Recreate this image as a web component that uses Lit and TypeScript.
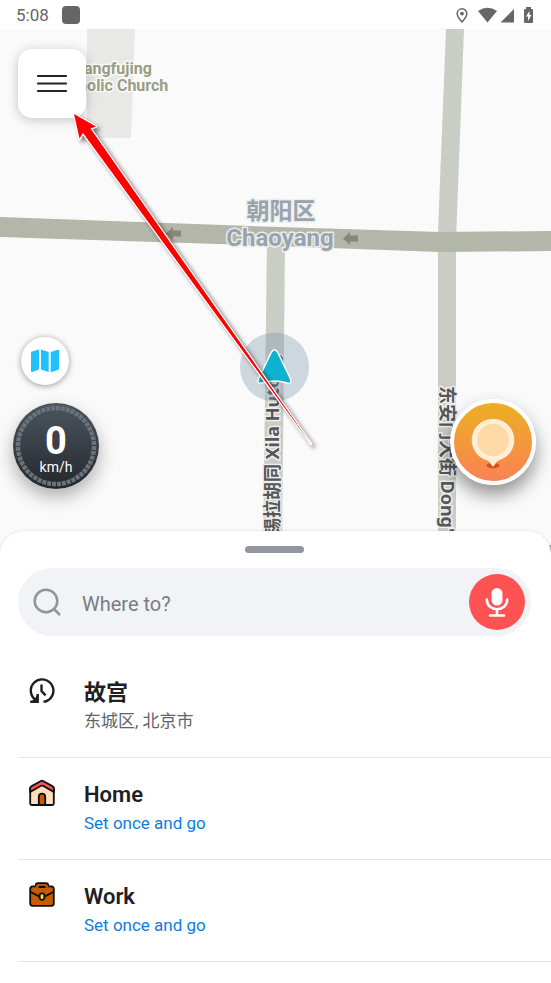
import { LitElement, html, svg, css, type TemplateResult } from "lit";
import { customElement, property } from "lit/decorators.js";

const historyIcon = html`<svg viewBox="0 0 28 28" width="28" height="28" fill="none" stroke="#1d1e22" stroke-width="2.4" aria-hidden="true">
  <path d="M8.500 23.500A11.300 11.300 0 1 1 15.500 24.900" />
  <path d="M9.700 17V24.700H2.300" />
  <path d="M9.600 17V25H2.600L6.600 22Z" fill="#1d1e22" stroke="none" />
  <path d="M13.500 7.500V14L17.600 18.400" />
</svg>`;

const homeIcon = html`<svg viewBox="0 0 28 28" width="28" height="28" stroke="#0e0e0e" stroke-width="1.800" stroke-linejoin="round" aria-hidden="true">
  <path d="M2.200 9V24.500Q2.200 26 3.700 26H24.300Q25.800 26 25.800 24.500V9L14 3Z" fill="#ffdfbd" />
  <path d="M2.200 9.200Q2.200 8 3.200 7.400L13 2Q14 1.500 15 2L24.800 7.400Q25.800 8 25.800 9.200V13L15 6.800Q14 6.300 13 6.800L2.200 13Z" fill="#ff5252" />
  <path d="M10.800 26V17.800A3.200 3.200 0 0 1 17.200 17.800V26Z" fill="#c75b00" />
</svg>`;

const workIcon = html`<svg viewBox="0 0 28 28" width="28" height="28" stroke="#0e0e0e" stroke-width="1.800" stroke-linejoin="round" stroke-linecap="round" aria-hidden="true">
  <path d="M7.800 7V4.500Q7.800 2.200 10 2.200H18Q20.200 2.200 20.200 4.500V7Z" fill="#c75b00" />
  <rect x="2.200" y="5.300" width="23.600" height="19.500" rx="2.600" fill="#c75b00" />
  <path d="M8.700 5.300H19.300" stroke="#c75b00" stroke-width="2.200" />
  <path d="M11.300 6H16.700" />
  <path d="M2.800 11L11.500 15.600M25.200 11L16.500 15.600" fill="none" />
  <path d="M11.700 14.200Q11.700 12.400 14 12.400T16.300 14.200V17Q15.800 19 14 19.200Q12.200 19 11.700 17Z" fill="#ffdb3a" />
</svg>`;

@customElement("place-row")
class PlaceRow extends LitElement {
  @property() name = "";
  @property() detail = "";
  @property({ attribute: false }) icon: TemplateResult = historyIcon;
  @property({ type: Boolean }) unset = false;

  static styles = css`
    :host {
      display: block;
      border-bottom: 1px solid #e4e5e7;
    }
    .row {
      box-sizing: border-box;
      display: flex;
      align-items: flex-start;
      gap: 28px;
      width: 100%;
      height: 101px;
      padding: 21px 16px 0 10px;
      border: 0;
      background: none;
      text-align: left;
      font-family: Roboto, "Noto Sans CJK SC", sans-serif;
      cursor: pointer;
    }
    .row svg {
      flex: none;
    }
    .text {
      display: flex;
      flex-direction: column;
    }
    .name {
      font-size: 22px;
      line-height: 32px;
      font-weight: 600;
      color: #1f2024;
    }
    .detail {
      font-size: 17px;
      line-height: 24px;
      color: #606369;
    }
    .unset {
      color: #0f7be0;
    }
  `;

  render() {
    return html`<button class="row">
      ${this.icon}
      <span class="text">
        <span class="name">${this.name}</span>
        <span class="detail ${this.unset ? "unset" : ""}">${this.detail}</span>
      </span>
    </button>`;
  }
}

@customElement("app-root")
class AppRoot extends LitElement {
  static styles = css`
    :host {
      display: flex;
      flex-direction: column;
      min-height: 100vh;
      background: #fff;
      overflow: hidden;
      font-family: Roboto, "Noto Sans CJK SC", sans-serif;
    }
    button {
      padding: 0;
      border: 0;
      cursor: pointer;
    }
    .status {
      display: flex;
      align-items: center;
      height: 29px;
      padding: 0 16px;
      color: #666;
    }
    .time {
      font-size: 17px;
      line-height: 20px;
    }
    .app {
      width: 18px;
      height: 18px;
      margin-left: 13px;
      border-radius: 4px;
      background: #666;
    }
    .signals {
      margin-left: auto;
    }
    .map {
      position: relative;
      flex: 1 0 480px;
      margin-bottom: -24px;
      background: #fafafa;
      overflow: hidden;
    }
    .canvas {
      position: absolute;
      inset: 0;
      width: 100%;
      height: 100%;
    }
    .arrow {
      pointer-events: none;
      filter: drop-shadow(3px 3px 2px rgba(0, 0, 0, 0.5));
    }
    .shaft {
      fill: #f00;
      stroke: #fff;
      stroke-width: 2.5;
      stroke-linejoin: round;
      paint-order: stroke;
    }
    .label {
      font-weight: 700;
      paint-order: stroke;
      stroke: #fafafa;
      stroke-width: 3px;
      stroke-linejoin: round;
    }
    .district {
      font-size: 24px;
      fill: #98a3ae;
      stroke: #eceeec;
    }
    .district-cjk {
      font-size: 23px;
    }
    .church {
      font-size: 16px;
      fill: #9a9e84;
    }
    .street {
      font-size: 18px;
      fill: #55575a;
      stroke: #eff0ee;
    }
    .latin {
      font-family: "Noto Sans", sans-serif;
    }
    .control {
      position: absolute;
      display: grid;
      place-items: center;
    }
    .menu {
      top: 20px;
      left: 18px;
      width: 68px;
      height: 69px;
      border-radius: 14px;
      background: #fff;
      box-shadow: 0 2px 12px rgba(0, 0, 0, 0.22);
    }
    .layers {
      bottom: 170px;
      left: 21px;
      width: 48px;
      height: 48px;
      border-radius: 50%;
      background: #fff;
      box-shadow: 0 1px 6px rgba(0, 0, 0, 0.4);
    }
    .speed {
      bottom: 66px;
      left: 13px;
      width: 86px;
      height: 86px;
      border-radius: 50%;
      background: linear-gradient(#4b5660, #24272b);
      box-shadow: 0 8px 18px rgba(0, 0, 0, 0.3);
      color: #fff;
    }
    .ticks {
      grid-area: 1 / 1;
    }
    .reading {
      grid-area: 1 / 1;
      display: flex;
      flex-direction: column;
      align-items: center;
      padding-top: 4px;
      font-family: Roboto, sans-serif;
    }
    .value {
      font-size: 38px;
      line-height: 38px;
      font-weight: 700;
    }
    .unit {
      font-size: 14px;
      line-height: 14px;
    }
    .report {
      right: 15px;
      bottom: 70px;
      box-sizing: border-box;
      width: 86px;
      height: 86px;
      border: 4px solid #fff;
      border-radius: 50%;
      background: linear-gradient(#ecb11f, #fb8058);
      background-origin: border-box;
      box-shadow: 0 10px 18px rgba(0, 0, 0, 0.42);
    }
    .sheet {
      position: relative;
      padding-bottom: 21px;
      border-radius: 24px 24px 0 0;
      background: #fff;
      box-shadow: 0 0 3px rgba(0, 0, 0, 0.12);
    }
    .handle {
      display: block;
      width: 59px;
      height: 7px;
      margin: 0 auto;
      border-radius: 4px;
      background: #92969f;
    }
    .grip {
      padding: 15px 2px 15px 0;
    }
    .search {
      display: flex;
      align-items: center;
      height: 68px;
      margin: 0 20px 20px 18px;
      padding: 0 6px 0 15px;
      box-sizing: border-box;
      border-radius: 34px;
      background: #f2f3f7;
    }
    .search svg {
      flex: none;
    }
    .query {
      flex: 1;
      min-width: 0;
      margin-left: 21px;
      padding: 4px 0 0;
      border: 0;
      outline: 0;
      background: none;
      font: 400 20px/28px Roboto, "Noto Sans CJK SC", sans-serif;
      color: #202124;
    }
    .query::placeholder {
      color: #787c83;
      opacity: 1;
    }
    .mic {
      display: grid;
      place-items: center;
      flex: none;
      width: 56px;
      height: 56px;
      border-radius: 50%;
      background: #ff5252;
    }
    .places {
      margin-left: 18px;
    }
  `;

  private renderMap() {
    const oneWay = svg`<path d="M0 6.500L7 0V3.500H15V9.500H7V13Z" fill="#858778" />`;
    return html`<svg class="canvas" viewBox="0 29 551 526" preserveAspectRatio="xMidYMid slice" role="img" aria-label="Map">
      <defs>
        <filter id="grain" x="0" y="0" width="100%" height="100%">
          <feTurbulence type="fractalNoise" baseFrequency="0.4" numOctaves="2" />
          <feColorMatrix values="0 0 0 0 0.35  0 0 0 0 0.38  0 0 0 0 0.32  0.3 0 0 0 -0.08" />
          <feComposite in2="SourceGraphic" operator="in" result="n" />
          <feMerge><feMergeNode in="SourceGraphic" /><feMergeNode in="n" /></feMerge>
        </filter>
      </defs>
      <path d="M87 29H135L131 138H87Z" fill="#e8e8e7" />
      <g filter="url(#grain)">
        <path d="M267 240H285L282 555H263Z" fill="#cdd0c8" />
        <path d="M446 29H464L456 240L456 555H438L438 232Z" fill="#cdd0c8" />
        <path d="M0 217L250 226L440 232L551 231V251L440 252L250 245L0 237Z" fill="#b5b8aa" />
        <path d="M548 545H551V552H549Z" fill="#b5b8aa" />
      </g>
      <g transform="translate(166 227)">${oneWay}</g>
      <g transform="translate(343 232)">${oneWay}</g>
      <text class="label church" text-anchor="middle" x="111" y="74">Wangfujing</text>
      <text class="label church" text-anchor="middle" x="111" y="91">Catholic Church</text>
      <text class="label district district-cjk" text-anchor="middle" x="281" y="219">朝阳区</text>
      <text class="label district" text-anchor="middle" x="280" y="246">Chaoyang</text>
      <text class="label street" transform="translate(279 536) rotate(-90)">锡拉胡同 <tspan class="latin">Xila Hutong</tspan></text>
      <text class="label street" transform="translate(441 386) rotate(90)">东安门大街 <tspan class="latin">Dong'</tspan></text>
      <circle cx="274.500" cy="367" r="34.500" fill="#7f95ab" fill-opacity="0.36" />
      <path d="M271.500 352Q274.500 347.500 277.500 352L290.500 379Q292.500 384.500 287 383Q274.500 379 262 383Q256.500 384.500 258.500 379Z" fill="#0cb2ce" stroke="#fff" stroke-width="1.500" />
    </svg>`;
  }

  render() {
    return html`
      <header class="status">
        <span class="time">5:08</span>
        <span class="app"></span>
        <svg class="signals" viewBox="455 4 80 20" width="80" height="20" fill="#666" aria-hidden="true">
          <path d="M462 7.800A4.800 4.800 0 0 1 466.800 12.600C466.800 16 462 21 462 21S457.200 16 457.200 12.600A4.800 4.800 0 0 1 462 7.800Z" fill="none" stroke="#666" stroke-width="1.500" />
          <circle cx="462" cy="12.600" r="1.900" />
          <path d="M478 10Q487.500 3.500 497 10L487.500 21.500Z" />
          <path d="M514 8V21.500H500.500Z" />
          <path fill-rule="evenodd" d="M526 6H531V8H532Q533 8 533 9V21Q533 22 532 22H525Q524 22 524 21V9Q524 8 525 8H526ZM529.500 10L526 15.500H528V20L531.500 14H529.500Z" />
        </svg>
      </header>
      <main class="map">
        ${this.renderMap()}
        <button class="control menu" aria-label="Menu">
          <svg width="30" height="20" viewBox="0 0 30 20" stroke="#222429" stroke-width="2.200" stroke-linecap="round" aria-hidden="true">
            <path d="M1 2H29M1 9.500H29M1 17H29" />
          </svg>
        </button>
        <button class="control layers" aria-label="Map layers">
          <svg width="28" height="24" viewBox="0 0 28 24" fill="#20c0ff" aria-hidden="true">
            <path d="M0 4Q0 3 1 2.600L8 .5V20.500L1.200 23Q0 23.300 0 22Z" />
            <path d="M10 .5L17.700 3V23L10 20.500Z" />
            <path d="M19.700 3L26.500 .8Q28 .4 28 1.800V19.500Q28 20.500 27 20.900L19.700 23.300Z" />
          </svg>
        </button>
        <div class="control speed">
          <svg class="ticks" width="86" height="86" viewBox="0 0 86 86" fill="none" aria-hidden="true">
            <circle cx="43" cy="43" r="38" stroke="#6a737b" stroke-width="4.500" pathLength="240" stroke-dasharray="4 1" />
          </svg>
          <div class="reading"><span class="value">0</span><span class="unit">km/h</span></div>
        </div>
        <button class="control report" aria-label="Report">
          <svg width="50" height="58" viewBox="0 0 50 58" aria-hidden="true">
            <ellipse cx="25" cy="52.500" rx="6.500" ry="2.800" fill="#d55118" />
            <path d="M25 6A21 21 0 0 1 31 47.200Q29.500 47.700 28.500 49.200L25.800 53Q25 54 24.200 53L21.500 49.200Q20.500 47.700 19 47.200A21 21 0 0 1 25 6Z" fill="#ffeed6" />
            <circle cx="25" cy="27" r="16" fill="#ffd9a6" />
          </svg>
        </button>
        <svg class="canvas arrow" viewBox="0 29 551 526" preserveAspectRatio="xMinYMin slice" aria-hidden="true">
          <path class="shaft" d="M74 114L96 126.500L90.500 128.500L311 444L83 133L79.500 138.500Z" />
        </svg>
      </main>
      <section class="sheet">
        <div class="grip"><span class="handle"></span></div>
        <form class="search" role="search">
          <svg width="28" height="28" viewBox="0 0 28 28" fill="none" stroke="#8f959c" stroke-width="2.500" aria-hidden="true">
            <circle cx="13" cy="13" r="11.300" />
            <path d="M20.500 20.500L27 27" />
          </svg>
          <input class="query" type="text" placeholder="Where to?" aria-label="Where to?" />
          <button class="mic" type="button" aria-label="Voice search">
            <svg width="24" height="32" viewBox="0 0 24 32" fill="none" stroke="#fff" stroke-width="2.600" stroke-linecap="round" aria-hidden="true">
              <rect x="6.500" y="2" width="11" height="17.500" rx="5.500" fill="#fff" stroke="none" />
              <path d="M1.800 13.500C1.800 26.500 22.200 26.500 22.200 13.500M12 23.500V29.500M5 29.500H19" />
            </svg>
          </button>
        </form>
        <nav class="places" aria-label="Saved places">
          <place-row name="故宫" detail="东城区, 北京市" .icon=${historyIcon}></place-row>
          <place-row name="Home" detail="Set once and go" .icon=${homeIcon} unset></place-row>
          <place-row name="Work" detail="Set once and go" .icon=${workIcon} unset></place-row>
        </nav>
      </section>
    `;
  }
}
